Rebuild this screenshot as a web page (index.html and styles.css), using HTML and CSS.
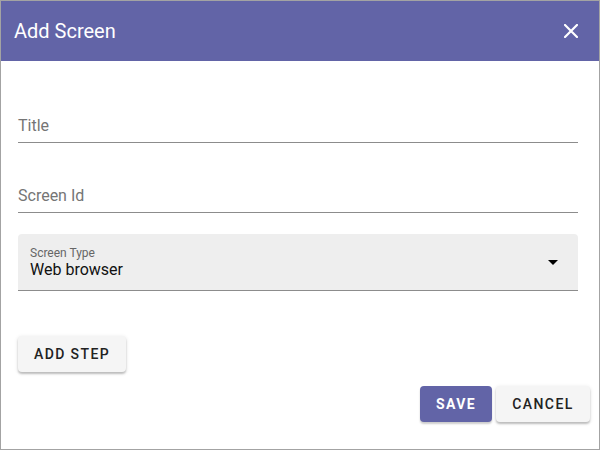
FILE: index.html
```html
<!DOCTYPE html>
<html>
<head>
<meta charset="utf-8">
<link rel="stylesheet" href="styles.css">
</head>
<body>
<div class="dialog">
  <header class="dialog-header">
    <h1 class="dialog-title">Add Screen</h1>
    <button class="close-btn" aria-label="Close">
      <svg width="14" height="14" viewBox="0 0 14 14"><path d="M1 1L13 13M13 1L1 13" stroke="#fff" stroke-width="2.2" stroke-linecap="square"/></svg>
    </button>
  </header>
  <div class="dialog-body">
    <div class="field field-first"><span class="placeholder">Title</span></div>
    <div class="field"><span class="placeholder">Screen Id</span></div>
    <div class="select">
      <div class="select-text">
        <span class="select-label">Screen Type</span>
        <span class="select-value">Web browser</span>
      </div>
      <svg class="select-arrow" width="10" height="5" viewBox="0 0 10 5"><path d="M0 0H10L5 5Z" fill="#000"/></svg>
    </div>
    <div class="add-row"><button class="btn btn-light">ADD STEP</button></div>
  </div>
  <div class="actions">
    <button class="btn btn-primary">SAVE</button>
    <button class="btn btn-light btn-cancel">CANCEL</button>
  </div>
</div>
</body>
</html>
```
FILE: styles.css
```css
* { box-sizing: border-box; }
html, body { margin: 0; padding: 0; background: #fff; }
body { font-family: Roboto, "Noto Sans", sans-serif; }
.dialog {
  width: 600px;
  height: 450px;
  border: 1px solid #a3a3a3;
  display: flex;
  flex-direction: column;
  background: #fff;
}
.dialog-header {
  height: 60px;
  background: #6264a7;
  display: flex;
  align-items: center;
  justify-content: space-between;
  padding: 0 21px 0 13px;
  flex-shrink: 0;
}
.dialog-title {
  margin: 0;
  font-size: 20px;
  font-weight: 400;
  color: #fff;
  line-height: 24px;
}
.close-btn {
  border: 0;
  background: none;
  padding: 0;
  width: 14px;
  height: 14px;
  display: flex;
}
.dialog-body {
  padding: 0 21px 0 17px;
  flex: 1;
}
.field {
  height: 48px;
  border-bottom: 1px solid #8c8c8c;
  display: flex;
  align-items: flex-end;
  padding-bottom: 4px;
  margin-top: 22px;
}
.field-first { margin-top: 34px; }
.placeholder {
  font-size: 16px;
  line-height: 24px;
  color: #757575;
}
.select {
  margin-top: 21px;
  height: 57px;
  background: #eeeeee;
  border-radius: 4px 4px 0 0;
  border-bottom: 1px solid #8c8c8c;
  display: flex;
  align-items: center;
  justify-content: space-between;
  padding: 0 20px 0 12px;
}
.select-text {
  display: flex;
  flex-direction: column;
  padding-top: 2px;
}
.select-label {
  font-size: 12px;
  line-height: 14px;
  color: #666;
}
.select-value {
  font-size: 16px;
  line-height: 20px;
  color: #111;
}
.add-row { margin-top: 45px; }
.btn {
  height: 36px;
  border: 0;
  border-radius: 4px;
  font-family: Roboto, "Noto Sans", sans-serif;
  font-size: 14px;
  font-weight: 500;
  letter-spacing: 1.4px;
  padding: 0 12px;
  cursor: pointer;
}
.btn-light {
  background: #f5f5f5;
  color: #222;
  box-shadow: 0 2px 2px rgba(0,0,0,0.2), 0 1px 4px rgba(0,0,0,0.12);
  width: 108px;
}
.btn-primary {
  background: #6264a7;
  color: #fff;
  font-weight: 700;
  width: 72px;
  box-shadow: 0 2px 2px rgba(0,0,0,0.2);
}
.btn-cancel { width: 94px; }
.actions {
  display: flex;
  justify-content: flex-end;
  gap: 4px;
  padding: 0 9px 27px 0;
}
```
